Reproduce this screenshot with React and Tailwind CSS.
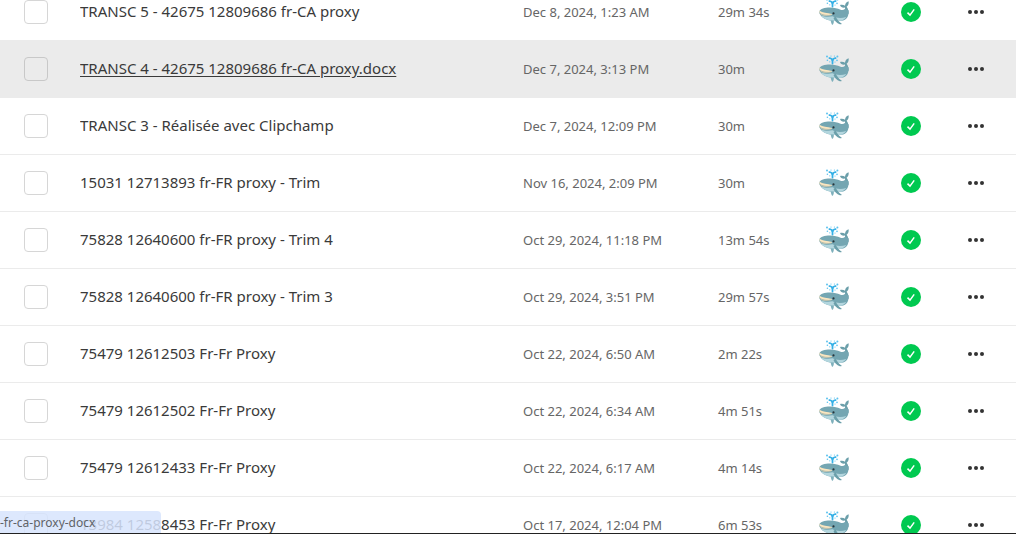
const files = [
  { name: "TRANSC 5 - 42675 12809686 fr-CA proxy", date: "Dec 8, 2024, 1:23 AM", length: "29m 34s" },
  { name: "TRANSC 4 - 42675 12809686 fr-CA proxy.docx", date: "Dec 7, 2024, 3:13 PM", length: "30m", active: true },
  { name: "TRANSC 3 - Réalisée avec Clipchamp", date: "Dec 7, 2024, 12:09 PM", length: "30m" },
  { name: "15031 12713893 fr-FR proxy - Trim", date: "Nov 16, 2024, 2:09 PM", length: "30m" },
  { name: "75828 12640600 fr-FR proxy - Trim 4", date: "Oct 29, 2024, 11:18 PM", length: "13m 54s" },
  { name: "75828 12640600 fr-FR proxy - Trim 3", date: "Oct 29, 2024, 3:51 PM", length: "29m 57s" },
  { name: "75479 12612503 Fr-Fr Proxy", date: "Oct 22, 2024, 6:50 AM", length: "2m 22s" },
  { name: "75479 12612502 Fr-Fr Proxy", date: "Oct 22, 2024, 6:34 AM", length: "4m 51s" },
  { name: "75479 12612433 Fr-Fr Proxy", date: "Oct 22, 2024, 6:17 AM", length: "4m 14s" },
  { name: "13984 12588453 Fr-Fr Proxy", date: "Oct 17, 2024, 12:04 PM", length: "6m 53s" },
];

function Whale() {
  return (
    <svg className="block h-7 w-[30px]" viewBox="0 0 30 28" aria-hidden="true">
      {/* spout */}
      <g fill="none" stroke="#35b0e6" strokeLinecap="round">
        <path d="M13.500 8.500V4.500" strokeWidth="1.800" />
        <path d="M13.300 5.200C12.600 3.600 11.600 3 10.400 3.200M13.700 5.200c.7-1.600 1.700-2.200 2.900-2" strokeWidth="1.800" />
      </g>
      <g fill="#5cc2ee">
        <circle cx="8" cy="1.600" r="1" />
        <circle cx="8.400" cy="5.200" r=".8" />
        <circle cx="10.800" cy="6.800" r=".6" />
        <circle cx="12" cy="1" r=".6" />
        <circle cx="15.400" cy="1" r=".6" />
        <circle cx="18.400" cy="1.600" r="1" />
        <circle cx="18" cy="5.400" r=".8" />
        <circle cx="16" cy="7" r=".6" />
      </g>
      {/* tail */}
      <path
        d="M25 14c1.200-1.500 1.400-3 .8-4.400-2 .4-4.200-.2-4.800-2.600 1.800-.5 3.800-.2 5 .8.100-2 1.200-3.800 3.600-4.600.4 2.400-.4 4.300-2 5.600 1.500 2 2.300 4.600 2 7.200z"
        fill="#6b9faa"
      />
      {/* body */}
      <path
        d="M.3 13.500C1.200 10.800 5.500 9.600 11 9.600c4.600 0 7.600 1 10 2 1.900.9 3.800.6 4.800-.6l3.800 1.200c.4 5.800-1.600 9.800-7.300 10.600C15 23.800 6 22.300 2.600 18.400 1.200 16.800 0 15.400.3 13.500z"
        fill="#74a6b2"
      />
      <path
        d="M1.800 17.500C6 19 10 19 13.500 18.300c3.500 2 9 2.200 13.800.8-1.200 1.900-3 3.100-5 3.600C14.500 23.800 5.500 22.500 1.800 17.500z"
        fill="#b3d6de"
      />
      <path d="M.4 12.700c3.300 2.300 7.500 2 12.600 3.300v1c-4 1.800-11 1.200-12.500-2z" fill="#fbe6bf" />
      <path d="M.5 15c2.500 2.300 8.200 3 12.500 2" fill="none" stroke="#67919b" strokeWidth=".5" />
      <circle cx="14.500" cy="15.400" r="1.100" fill="#26343a" />
      {/* fins */}
      <path d="M16.500 18.500c1.500 2.800 3.400 5.600 6.300 7.300-.4.600-1.200.7-2 .4-3-1-5.300-3.400-6.300-6.200z" fill="#6b9faa" />
      <path d="M11.800 22.400h3c.2 1.600-.2 3.200-1.300 4.600-1.100-1.200-1.700-2.800-1.700-4.600z" fill="#7eb0bc" />
    </svg>
  );
}

function DoneBadge() {
  return (
    <svg className="block size-5" viewBox="0 0 20 20" role="img" aria-label="Completed">
      <circle cx="10" cy="10" r="10" fill="#00c950" />
      <path d="M6.500 10.600l2.500 2.500 4.200-5.700" fill="none" stroke="#fff" strokeWidth="1.500" />
    </svg>
  );
}

function FileRow({ file }) {
  return (
    <tr className={`h-[57px] text-sm text-[#666] ${file.active ? "bg-[#ebebeb]" : "bg-white"}`}>
      <td className="border-b border-[#ebebeb] pl-6">
        <input
          type="checkbox"
          aria-label={`Select ${file.name}`}
          className={`block size-6 appearance-none rounded border ${
            file.active ? "border-[#c8c8c8]" : "border-[#d6d6d6]"
          }`}
        />
      </td>
      <td className="truncate border-b border-[#ebebeb] text-[15px] text-[#3a3a3a]">
        <a href="#file" className={file.active ? "underline underline-offset-2" : "hover:underline"}>
          {file.name}
        </a>
      </td>
      <td className="border-b border-[#ebebeb] text-[13px]">{file.date}</td>
      <td className="border-b border-[#ebebeb] text-[13px]">{file.length}</td>
      <td className="border-b border-[#ebebeb]">
        <Whale />
      </td>
      <td className="border-b border-[#ebebeb]">
        <DoneBadge />
      </td>
      <td className="border-b border-[#ebebeb]">
        <button type="button" aria-label="More options" className="block">
          <svg className="block h-5 w-4" viewBox="0 0 16 20" fill="#333">
            <circle cx="2" cy="10" r="2" />
            <circle cx="8" cy="10" r="2" />
            <circle cx="14" cy="10" r="2" />
          </svg>
        </button>
      </td>
    </tr>
  );
}

export default function App() {
  return (
    <div className="relative h-screen overflow-hidden border-b border-[#222] bg-white font-['Noto_Sans','Open_Sans',sans-serif]">
      {/* list is scrolled a little past the top of the first row */}
      <table className="-mt-4 w-full table-fixed border-separate border-spacing-0">
        <colgroup>
          <col className="w-20" />
          <col />
          <col className="w-[195px]" />
          <col className="w-[101px]" />
          <col className="w-[82px]" />
          <col className="w-[67px]" />
          <col className="w-12" />
        </colgroup>
        <tbody>
          {files.map((file) => (
            <FileRow key={file.name} file={file} />
          ))}
        </tbody>
      </table>

      {/* link preview */}
      <div className="absolute bottom-0 left-0 h-[22px] w-[161px] rounded-tr bg-[#d7e4fd]/85 text-xs leading-6 text-[#5f6368]">
        -fr-ca-proxy-docx
      </div>
    </div>
  );
}
